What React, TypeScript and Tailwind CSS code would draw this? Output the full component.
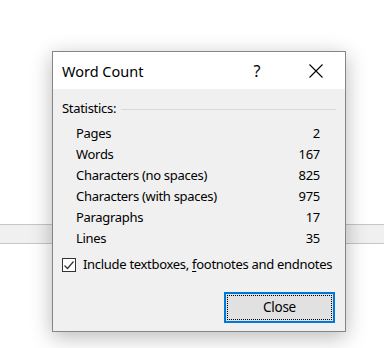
import React from "react";

const rows: [string, string][] = [
  ["Pages", "2"],
  ["Words", "167"],
  ["Characters (no spaces)", "825"],
  ["Characters (with spaces)", "975"],
  ["Paragraphs", "17"],
  ["Lines", "35"],
];

export default function App() {
  return (
    <div
      className="relative w-[384px] h-[348px] bg-white overflow-hidden text-black"
      style={{ fontFamily: '"Noto Sans", "Open Sans", sans-serif' }}
    >
      <div className="pt-[224px]">
        <div className="h-[20px] bg-[#f0f0f0] border-y border-[#c6c6c6]" />
      </div>

      <div className="absolute left-[52px] top-[51px] w-[294px] h-[281px] border border-[#858585] bg-[#f0f0f0] shadow-[0_5px_20px_rgba(0,0,0,0.28)] flex flex-col">
        <div className="h-[37px] bg-white flex items-center pl-[9px] text-[14.5px] leading-none">
          <span className="flex-1 pt-[1px]">Word Count</span>
          <span className="w-[12px] text-center mr-[46px] pt-[1px] text-[16px]">?</span>
          <svg width="14" height="14" viewBox="0 0 14 14" className="mr-[22px]">
            <path d="M0.5 0.5 L13.5 13.5 M13.5 0.5 L0.5 13.5" stroke="#000" strokeWidth="1.1" />
          </svg>
        </div>
        <div className="flex-1 flex flex-col pl-[9px] pr-[9px] text-[13px] tracking-[-0.3px] whitespace-nowrap">
          <div className="mt-[10px] h-[20px] flex items-center gap-[5px]">
            <span>Statistics:</span>
            <div className="flex-1 h-px bg-[#d9d9d9]" />
          </div>
          <div className="mt-[4px] flex flex-col pl-[14px] pr-[16px]">
            {rows.map(([k, v]) => (
              <div key={k} className="h-[21px] flex items-center justify-between">
                <span>{k}</span>
                <span>{v}</span>
              </div>
            ))}
          </div>
          <div className="mt-[6px] h-[20px] flex items-center gap-[7px]">
            <div className="w-[14px] h-[14px] border border-[#333] bg-white flex items-center justify-center">
              <svg width="12" height="12" viewBox="0 0 12 12">
                <path d="M1.5 6.5 L4.5 9.5 L10.5 2.5" fill="none" stroke="#333" strokeWidth="1.2" />
              </svg>
            </div>
            <span>
              Include textboxes, <span className="underline underline-offset-2">f</span>ootnotes and endnotes
            </span>
          </div>
          <div className="mt-[17px] flex justify-end pr-[1px]">
            <div className="w-[111px] h-[31px] border-2 border-[#0078d7] bg-[#e1e1e1] p-[1px]">
              <div className="w-full h-full border border-dotted border-black flex items-center justify-center text-[13.5px]">
                Close
              </div>
            </div>
          </div>
        </div>
      </div>
    </div>
  );
}
